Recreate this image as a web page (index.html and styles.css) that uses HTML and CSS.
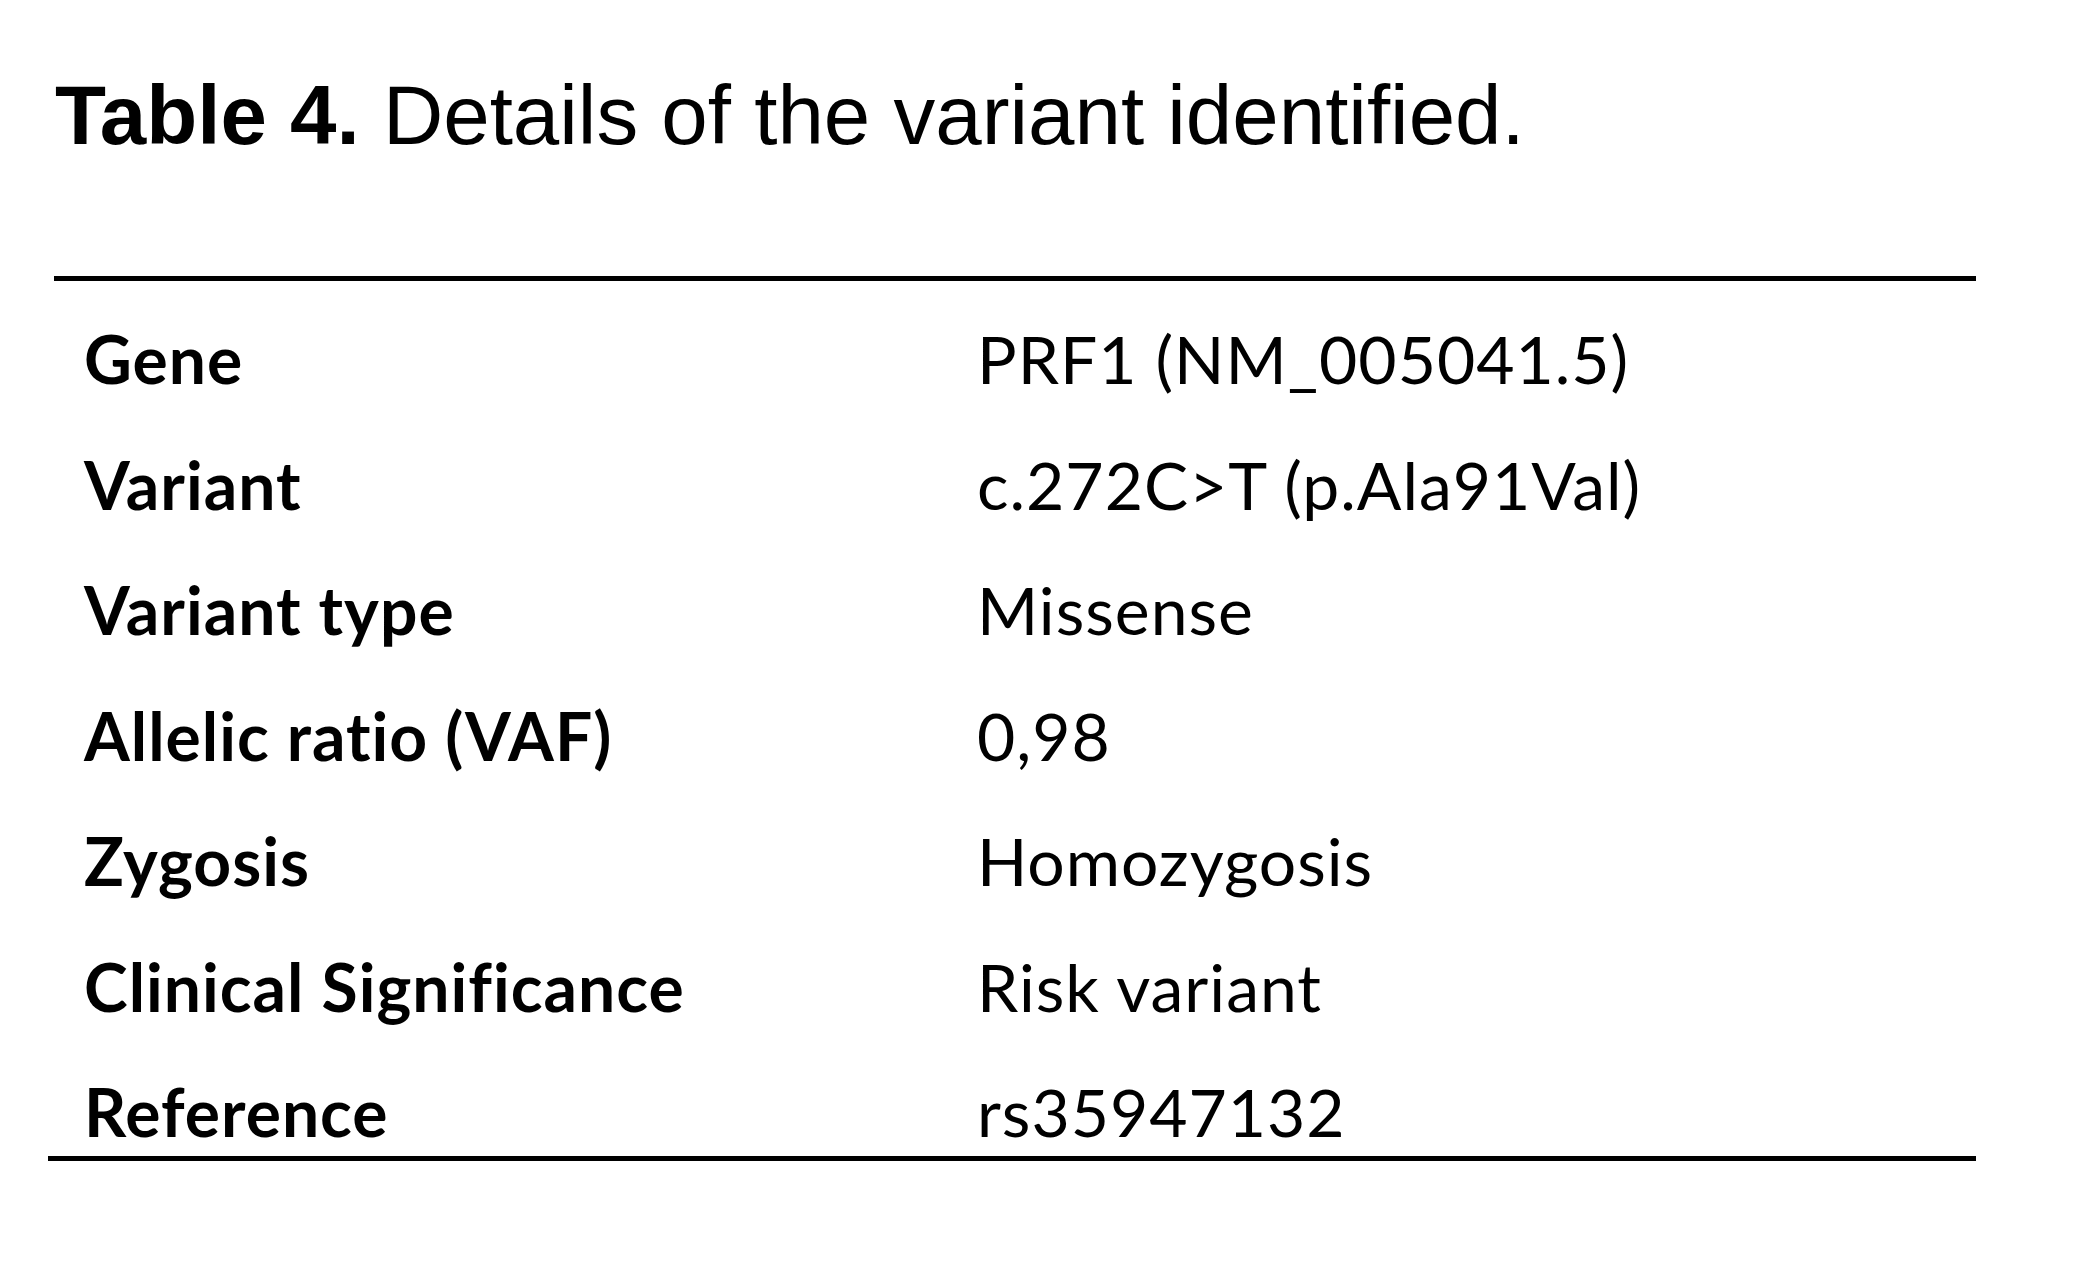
FILE: index.html
```html
<!DOCTYPE html>
<html lang="en">
<head>
<meta charset="utf-8">
<title>Table 4. Details of the variant identified.</title>
<link rel="stylesheet" href="styles.css">
</head>
<body>
<div class="page">
  <h1 class="caption"><b>Table 4.</b> Details of the variant identified.</h1>
  <div class="table-wrap">
    <div class="rule rule-top"></div>
    <div class="grid">
      <div class="label">Gene</div><div class="value">PRF1 (NM_005041.5)</div>
      <div class="label">Variant</div><div class="value">c.272C&gt;T (p.Ala91Val)</div>
      <div class="label">Variant type</div><div class="value">Missense</div>
      <div class="label">Allelic ratio (VAF)</div><div class="value">0,98</div>
      <div class="label">Zygosis</div><div class="value">Homozygosis</div>
      <div class="label">Clinical Significance</div><div class="value">Risk variant</div>
      <div class="label">Reference</div><div class="value">rs35947132</div>
    </div>
    <div class="rule rule-bottom"></div>
  </div>
</div>
</body>
</html>
```

FILE: styles.css
```css
html, body {
  margin: 0;
  padding: 0;
  background: #ffffff;
  color: #000000;
}

.page {
  width: 2073px;
  height: 1266px;
  overflow: hidden;
}

.caption {
  margin: 73px 0 0 55px;
  font-family: "Liberation Sans", Arial, sans-serif;
  font-size: 83.5px;
  font-weight: 400;
  line-height: 84px;
  white-space: nowrap;
}

.caption b {
  font-weight: 700;
}

.table-wrap {
  margin: 119px 0 0 48px;
  width: 1928px;
}

.rule {
  height: 5px;
  background: #000;
}

.rule-top {
  margin-left: 6px;
}

.grid {
  display: grid;
  grid-template-columns: 929px 1fr;
  grid-auto-rows: 80px;
  row-gap: 45.5px;
  padding: 38px 0 4px 0;
  font-family: Lato, "Open Sans", sans-serif;
  font-size: 66px;
  letter-spacing: 1px;
  line-height: 80px;
  white-space: nowrap;
}

.label {
  font-weight: 700;
  padding-left: 36px;
}

.value {
  font-weight: 400;
}
```
